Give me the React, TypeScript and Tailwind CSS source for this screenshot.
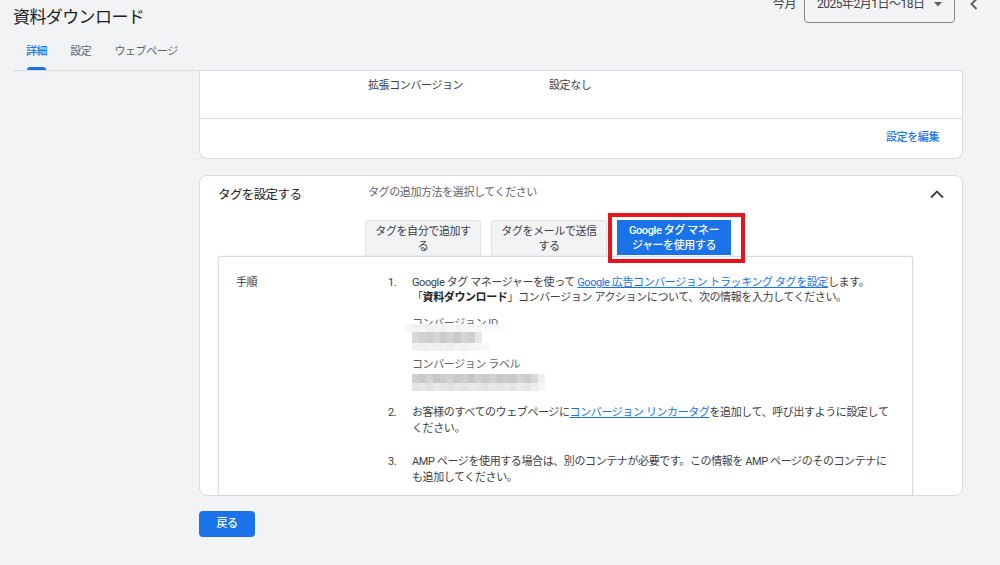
import React from "react";

const idTop = ["bg-[#f7f7f7]", "bg-[#f3f3f3]", "bg-[#f6f6f6]", "bg-[#f1f1f1]", "bg-[#f5f5f5]", "bg-[#f2f2f2]", "bg-[#f6f6f6]", "bg-[#f4f4f4]", "bg-[#f7f7f7]", "bg-[#f8f8f8]", "bg-[#f9f9f9]", "bg-[#fafafa]", "bg-[#fbfbfb]", "bg-[#fcfcfc]", "bg-[#fdfdfd]"];
const idMid = ["bg-[#d8d8d8]", "bg-[#d2d2d2]", "bg-[#cdcdcd]", "bg-[#d6d6d6]", "bg-[#cbcbcb]", "bg-[#d3d3d3]", "bg-[#c9c9c9]", "bg-[#d5d5d5]", "bg-[#cfcfcf]", "bg-[#e6e6e6]"];
const idBot = ["bg-[#f0f0f0]", "bg-[#eeeeee]", "bg-[#f2f2f2]", "bg-[#efefef]", "bg-[#f1f1f1]", "bg-[#eeeeee]", "bg-[#f3f3f3]", "bg-[#f0f0f0]", "bg-[#f4f4f4]", "bg-[#f6f6f6]", "bg-[#f8f8f8]"];
const lbTop = ["bg-[#cfcfcf]", "bg-[#c9c9c9]", "bg-[#d3d3d3]", "bg-[#c7c7c7]", "bg-[#cdcdcd]", "bg-[#d1d1d1]", "bg-[#c8c8c8]", "bg-[#cecece]", "bg-[#c6c6c6]", "bg-[#d0d0d0]", "bg-[#cacaca]", "bg-[#d2d2d2]", "bg-[#c8c8c8]", "bg-[#cccccc]", "bg-[#c9c9c9]", "bg-[#d4d4d4]", "bg-[#cdcdcd]", "bg-[#d8d8d8]", "bg-[#eeeeee]"];
const lbBot = ["bg-[#e4e4e4]", "bg-[#e8e8e8]", "bg-[#e2e2e2]", "bg-[#e9e9e9]", "bg-[#e5e5e5]", "bg-[#e1e1e1]", "bg-[#e7e7e7]", "bg-[#e3e3e3]", "bg-[#eaeaea]", "bg-[#e6e6e6]", "bg-[#e2e2e2]", "bg-[#e8e8e8]", "bg-[#e4e4e4]", "bg-[#e9e9e9]", "bg-[#e5e5e5]", "bg-[#ebebeb]", "bg-[#e7e7e7]", "bg-[#eeeeee]", "bg-[#f6f6f6]"];

function Row({ cells, h }: { cells: string[]; h: string }) {
  return (
    <div className="flex">
      {cells.map((c, i) => (
        <div key={i} className={`w-[7px] ${h} ${c}`} />
      ))}
    </div>
  );
}

export default function App() {
  return (
    <div className="w-[1000px] h-[565px] bg-[#f1f3f4] overflow-hidden flex flex-col font-['Roboto','Noto_Sans_CJK_JP',sans-serif] text-[11px] tracking-[-0.4px] text-[#3c4043]">
      {/* header */}
      <div className="flex flex-col pl-[13px]">
        <div className="h-[34px] flex justify-between items-start">
          <div className="pt-[5px] text-[17px] leading-[24px] tracking-[-0.6px] text-[#202124]">資料ダウンロード</div>
          <div className="flex items-center -mt-[15px] h-[38px] text-[12px] text-[#3c4043]">
            <span className="mr-[8px]">今月</span>
            <div className="w-[151px] h-[38px] border border-[#80868b] rounded-b-[4px] flex items-center pl-[12px] pr-[12px] justify-between">
              <span className="tracking-[-0.5px]">2025年2月1日〜18日</span>
              <svg width="8" height="5" viewBox="0 0 8 5"><path d="M0 0h8L4 4.5z" fill="#5f6368" /></svg>
            </div>
            <svg className="ml-[14px] mr-[21px]" width="10" height="12" viewBox="0 0 10 12">
              <path d="M7.5 1L2.5 6l5 5" fill="none" stroke="#5f6368" strokeWidth="2" />
            </svg>
          </div>
        </div>
        <div className="h-[37px] mr-[37px] border-b border-[#dadce0] flex pl-[13px] gap-[23px]">
          <div className="h-[36px] flex flex-col justify-between">
            <span className="pt-[10px] leading-[16px] text-[#1a73e8] font-medium">詳細</span>
            <div className="h-[3px] mx-[1px] rounded-t-[3px] bg-[#1a73e8]" />
          </div>
          <div className="pt-[10px] leading-[16px] text-[#5f6368]">設定</div>
          <div className="pt-[10px] leading-[16px] text-[#5f6368]">ウェブページ</div>
        </div>
      </div>

      {/* content */}
      <div className="flex">
        <div className="w-[199px] shrink-0" />
        <div className="w-[764px] shrink-0 flex flex-col">
          {/* card 1 */}
          <div className="bg-white border border-t-0 border-[#dadce0] rounded-b-[8px]">
            <div className="h-[47px] flex pl-[168px] pt-[7px] leading-[16px]">
              <span className="w-[181px]">拡張コンバージョン</span>
              <span>設定なし</span>
            </div>
            <div className="h-[40px] border-t border-[#dadce0] flex items-center justify-end pr-[23px]">
              <span className="text-[#1a73e8] font-medium">設定を編集</span>
            </div>
          </div>

          {/* card 2 */}
          <div className="relative mt-[16px] bg-white border border-[#dadce0] rounded-[8px] flex flex-col pl-[18px]">
            <div className="flex items-start pt-[9px] h-[44px]">
              <span className="w-[150px] h-[20px] text-[12.5px] leading-[20px] tracking-[-0.6px] text-[#202124]">タグを設定する</span>
              <span className="flex-1 h-[16px] leading-[16px] text-[#5f6368]">タグの追加方法を選択してください</span>
              <svg className="mr-[18px] mt-[5px]" width="14" height="9" viewBox="0 0 14 9">
                <path d="M1 7.5L7 1.5l6 6" fill="none" stroke="#3c4043" strokeWidth="1.8" />
              </svg>
            </div>
            <div className="flex ml-[147px] gap-[10px]">
              <div className="w-[116px] h-[36px] bg-[#f1f3f4] border border-b-0 border-[#e3e3e3] rounded-t-[3px] flex flex-col items-center justify-center text-center leading-[15px]">
                <span className="h-[15px]">タグを自分で追加す</span>
                <span className="h-[15px]">る</span>
              </div>
              <div className="w-[116px] h-[36px] bg-[#f1f3f4] border border-b-0 border-[#e3e3e3] rounded-t-[3px] flex flex-col items-center justify-center text-center leading-[15px]">
                <span className="h-[15px]">タグをメールで送信</span>
                <span className="h-[15px]">する</span>
              </div>
              <div className="w-[114px] h-[35px] bg-[#1a73e8] text-white font-medium flex flex-col items-center justify-center text-center leading-[15px]">
                <span className="h-[15px]">Google タグ マネー</span>
                <span className="h-[15px]">ジャーを使用する</span>
              </div>
            </div>

            {/* inner box */}
            <div className="w-[695px] bg-white border border-b-0 border-[#dadce0] rounded-t-[3px] shadow-[0_0_2px_rgba(60,64,67,0.15)] flex pl-[17px] pt-[18px] pb-[9px] leading-[16px]">
              <div className="w-[152px] shrink-0 h-[16px] text-[#3c4043]">手順</div>
              <div className="flex flex-col">
                {/* step 1 */}
                <div className="flex">
                  <span className="w-[24px] h-[16px] shrink-0">1.</span>
                  <div className="flex flex-col">
                    <span className="h-[15px] whitespace-nowrap">
                      Google タグ マネージャーを使って <span className="text-[#1a73e8] underline">Google 広告コンバージョン トラッキング タグを設定</span>します。
                    </span>
                    <span className="h-[16px] whitespace-nowrap">
                      「<b className="font-bold text-[#202124]">資料ダウンロード</b>」コンバージョン アクションについて、次の情報を入力してください。
                    </span>
                    <span className="h-[16px] mt-[10px] text-[#5f6368]">コンバージョン ID</span>
                    <div className="-mt-[8px] -ml-[7px] flex flex-col">
                      <div className="opacity-90"><Row cells={idTop} h="h-[8px]" /></div>
                      <div className="ml-[7px]"><Row cells={idMid} h="h-[11px]" /></div>
                      <div className="ml-[7px]"><Row cells={idBot} h="h-[8px]" /></div>
                    </div>
                    <span className="h-[16px] mt-[6px] text-[#5f6368]">コンバージョン ラベル</span>
                    <div className="mt-[1px] flex flex-col">
                      <Row cells={lbTop} h="h-[9px]" />
                      <Row cells={lbBot} h="h-[8px]" />
                    </div>
                  </div>
                </div>
                {/* step 2 */}
                <div className="flex mt-[14px]">
                  <span className="w-[24px] h-[16px] shrink-0">2.</span>
                  <div className="flex flex-col">
                    <span className="h-[16px] whitespace-nowrap">
                      お客様のすべてのウェブページに<span className="text-[#1a73e8] underline">コンバージョン リンカータグ</span>を追加して、呼び出すように設定して
                    </span>
                    <span className="h-[16px]">ください。</span>
                  </div>
                </div>
                {/* step 3 */}
                <div className="flex mt-[17px]">
                  <span className="w-[24px] h-[16px] shrink-0">3.</span>
                  <div className="flex flex-col">
                    <span className="h-[16px] whitespace-nowrap">
                      AMP ページを使用する場合は、別のコンテナが必要です。この情報を AMP ページのそのコンテナに
                    </span>
                    <span className="h-[16px]">も追加してください。</span>
                  </div>
                </div>
              </div>
            </div>

            {/* annotation */}
            <div className="absolute left-[408px] top-[37px] w-[137px] h-[50px] border-[4px] border-[#e8141d] pointer-events-none" />
          </div>

          <div className="mt-[15px] w-[56px] h-[26px] rounded-[4px] bg-[#1a73e8] text-white font-medium flex items-center justify-center">
            戻る
          </div>
        </div>
      </div>
    </div>
  );
}
